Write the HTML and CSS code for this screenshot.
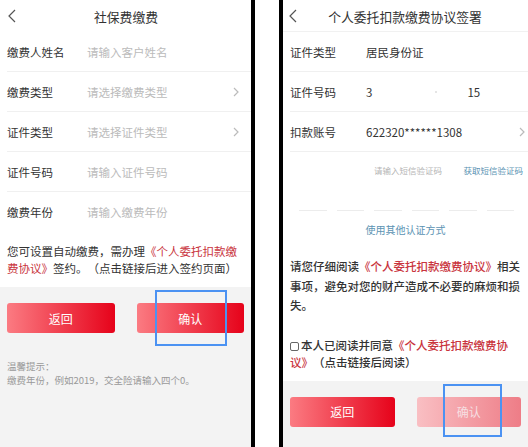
FILE: index.html
```html
<!DOCTYPE html>
<html lang="zh-CN">
<head>
  <meta charset="UTF-8" />
  <meta name="viewport" content="width=device-width, initial-scale=1" />
  <title>社保费缴费</title>
  <link rel="stylesheet" href="styles.css">
</head>
<body>

  <div class="screens">

    <!-- 左：社保费缴费 -->
    <section class="phone phone-left">
      <header class="nav">
        <svg class="back" width="8" height="14" viewBox="0 0 8 14"><polyline points="7,1 1,7 7,13" /></svg>
        <h1>社保费缴费</h1>
        <span></span>
      </header>

      <div class="form">
        <div class="row">
          <span class="label">缴费人姓名</span>
          <span class="ph">请输入客户姓名</span>
        </div>
        <div class="row">
          <span class="label">缴费类型</span>
          <span class="ph">请选择缴费类型</span>
          <svg class="arrow" width="6" height="10" viewBox="0 0 6 10"><polyline points="1,1 5,5 1,9" /></svg>
        </div>
        <div class="row">
          <span class="label">证件类型</span>
          <span class="ph">请选择证件类型</span>
          <svg class="arrow" width="6" height="10" viewBox="0 0 6 10"><polyline points="1,1 5,5 1,9" /></svg>
        </div>
        <div class="row">
          <span class="label">证件号码</span>
          <span class="ph">请输入证件号码</span>
        </div>
        <div class="row last">
          <span class="label">缴费年份</span>
          <span class="ph">请输入缴费年份</span>
        </div>
      </div>

      <p class="notice">您可设置自动缴费，需办理<span class="link">《个人委托扣款缴费协议》</span>签约。（点击链接后进入签约页面）</p>

      <div class="footer">
        <div class="btns">
          <button class="btn">返回</button>
          <button class="btn">确认<span class="focus-box"></span></button>
        </div>
        <div class="tips">温馨提示：<br>缴费年份，例如2019，交全险请输入四个0。</div>
      </div>
    </section>

    <div class="gap"></div>

    <!-- 右：协议签署 -->
    <section class="phone phone-right">
      <header class="nav line">
        <svg class="back" width="8" height="14" viewBox="0 0 8 14"><polyline points="7,1 1,7 7,13" /></svg>
        <h1>个人委托扣款缴费协议签署</h1>
        <span></span>
      </header>

      <div class="form">
        <div class="row">
          <span class="label">证件类型</span>
          <span class="val">居民身份证</span>
        </div>
        <div class="row">
          <span class="label">证件号码</span>
          <span class="val">3<span class="dot"></span><span class="tail">15</span></span>
        </div>
        <div class="row">
          <span class="label">扣款账号</span>
          <span class="val">622320******1308</span>
          <svg class="arrow" width="6" height="10" viewBox="0 0 6 10"><polyline points="1,1 5,5 1,9" /></svg>
        </div>
      </div>

      <div class="sms">
        <span class="sms-ph">请输入短信验证码</span>
        <span class="sms-get">获取短信验证码</span>
      </div>
      <div class="code-line">
        <i></i><i></i><i></i><i></i><i></i><i></i>
      </div>
      <div class="other">使用其他认证方式</div>

      <p class="read">请您仔细阅读<span class="link">《个人委托扣款缴费协议》</span>相关事项，避免对您的财产造成不必要的麻烦和损失。</p>

      <p class="agree"><span class="check"></span>本人已阅读并同意<span class="link">《个人委托扣款缴费协议》</span>（点击链接后阅读）</p>

      <div class="footer">
        <div class="btns">
          <button class="btn">返回</button>
          <button class="btn disabled">确认<span class="focus-box"></span></button>
        </div>
      </div>
    </section>

  </div>

</body>
</html>
```

FILE: styles.css
```css
/* Reset & Basic */
* {
  box-sizing: border-box;
}
body {
  margin: 0;
  font-family: "Noto Sans CJK SC", "Noto Sans", sans-serif;
  background: #fff;
  color: #333;
  text-spacing-trim: space-all;
}

.screens {
  display: flex;
  width: 528px;
  height: 447px;
  overflow: hidden;
}

/* 每个手机画面 */
.phone {
  display: flex;
  flex-direction: column;
  background: #fff;
  height: 447px;
}
.phone-left {
  width: 255px;
  border-right: 4px solid #000;
}
.phone-right {
  flex: 1;
  border-left: 4px solid #000;
}
.gap {
  width: 24px;
}

/* 顶部导航 */
.nav {
  display: grid;
  grid-template-columns: 1fr auto 1fr;
  align-items: center;
  height: 32px;
  padding: 0 7px 0 8px;
  flex-shrink: 0;
}
.nav h1 {
  margin: 0;
  font-size: 12.8px;
  font-weight: 400;
  color: #333;
}
.nav.line {
  padding-left: 6px;
  box-shadow: inset 0 -1px 0 #f1f1f1;
}
.back polyline,
.arrow polyline {
  fill: none;
  stroke-width: 1.2;
}
.back polyline {
  stroke: #555;
}
.arrow polyline {
  stroke: #bbb;
}

/* 表单行 */
.row {
  display: flex;
  align-items: center;
  height: 40px;
  margin-left: 7px;
  border-bottom: 1px solid #f0f0f0;
  font-size: 11.5px;
}
.row.last {
  border-bottom: none;
}
.phone-left .label {
  width: 80px;
  color: #333;
}
.phone-right .label {
  width: 76px;
  color: #333;
}
.ph {
  flex: 1;
  color: #bbb;
}
.val {
  flex: 1;
  color: #333;
  display: flex;
  align-items: center;
}
.dot {
  width: 2px;
  height: 2px;
  margin-left: 63px;
  background: #ddd;
  border-radius: 50%;
}
.tail {
  margin-left: 30px;
}
.phone-left .arrow {
  margin-right: 12px;
}
.phone-right .arrow {
  margin-right: 3px;
}

.link {
  color: #c9343d;
}

/* 说明文字 */
.notice {
  margin: 11px 7px 10px;
  font-size: 11.5px;
  line-height: 17px;
  color: #333;
}

/* 底部灰色区域 */
.footer {
  flex: 1;
  background: #f3f3f3;
  padding: 16px 7px 0;
}
.btns {
  display: flex;
  gap: 22px;
}
.btn {
  position: relative;
  flex: 1;
  height: 30px;
  border: none;
  border-radius: 3px;
  background: linear-gradient(to right, #fb7b82, #e6021a);
  color: #fff;
  font-family: inherit;
  font-size: 12px;
  padding: 0;
}
.btn.disabled {
  background: linear-gradient(to right, #f9bfc3, #ee7d87);
  color: #f6dfe1;
}
.focus-box {
  position: absolute;
  top: -13px;
  left: 18px;
  width: 72px;
  height: 56px;
  border: 2px solid #4b92f2;
}
.phone-right .focus-box {
  left: 26px;
  width: 59px;
  height: 53px;
}
.tips {
  margin-top: 26px;
  font-size: 9.5px;
  line-height: 14px;
  color: #999;
}

/* 右侧：短信验证 */
.sms {
  display: flex;
  align-items: center;
  justify-content: space-between;
  height: 36px;
  padding: 0 5px 0 91px;
  font-size: 8.5px;
}
.sms-ph {
  color: #b5b5b5;
}
.sms-get {
  color: #5b93b3;
}
.code-line {
  display: flex;
  gap: 10px;
  margin: 22px 14px 0 16px;
}
.code-line i {
  flex: 1;
  height: 1px;
  background: #ececec;
}
.other {
  margin-top: 12px;
  text-align: center;
  font-size: 10px;
  line-height: 14px;
  color: #5b93b3;
}
.read {
  margin: 20px 6px 0 7px;
  font-size: 11.5px;
  line-height: 19.5px;
  font-weight: 500;
  color: #333;
}
.agree {
  margin: 21px 6px 10px 7px;
  font-size: 11.5px;
  line-height: 17px;
  font-weight: 500;
  color: #333;
}
.check {
  display: inline-block;
  width: 9px;
  height: 9px;
  margin-right: 2px;
  border: 1px solid #666;
  border-radius: 2px;
  vertical-align: -1px;
}
.phone-right .footer {
  padding-top: 16px;
}
```
